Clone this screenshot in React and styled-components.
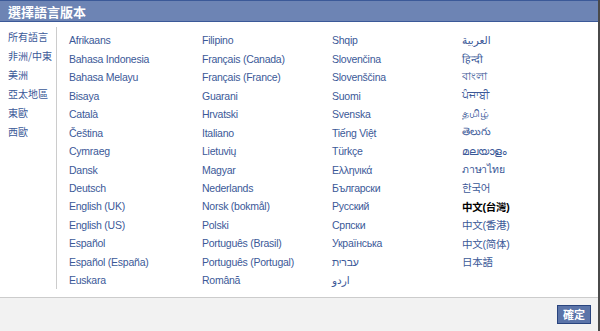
import styled, { createGlobalStyle } from "styled-components";

const GlobalStyle = createGlobalStyle`
  html, body {
    margin: 0;
    padding: 0;
    background: #fff;
  }
  body {
    font-family: Tahoma, "DejaVu Sans", "Noto Sans CJK TC", sans-serif;
  }
`;

const Dialog = styled.div`
  width: 598px;
  height: 331px;
  border-right: 2px solid #4a4a4a;
  display: flex;
  flex-direction: column;
  background: #fff;
`;

const Header = styled.div`
  height: 21px;
  background: #6d84b4;
  border-top: 1px solid #3b5998;
  border-bottom: 1px solid #3b5998;
  display: flex;
  align-items: center;
  padding-left: 8px;
`;

const Title = styled.h2`
  margin: 0;
  font-family: "Noto Sans CJK TC", sans-serif;
  font-size: 13px;
  font-weight: bold;
  color: #fff;
  line-height: 1;
`;

const Body = styled.div`
  flex: 1;
  display: flex;
  padding: 5px 0 8px;
`;

const Sidebar = styled.ul`
  list-style: none;
  margin: 0;
  padding: 0 0 0 8px;
  width: 48px;
  border-right: 1px solid #cccccc;
`;

const SideItem = styled.li`
  height: 19px;
  display: flex;
  align-items: center;
  font-family: "Noto Sans CJK TC", sans-serif;
  font-size: 10px;
  color: #3b5998;
  cursor: pointer;
`;

const Columns = styled.div`
  flex: 1;
  display: grid;
  grid-template-columns: 133px 130px 130px 1fr;
  padding: 4px 0 0 12px;
`;

const Column = styled.ul`
  list-style: none;
  margin: 0;
  padding: 0;
`;

const Lang = styled.li`
  height: 18.46px;
  display: flex;
  align-items: center;
  font-family: "Liberation Sans", "DejaVu Sans", "Noto Sans CJK TC", "Noto Sans CJK KR", sans-serif;
  font-size: 10.5px;
  letter-spacing: -0.25px;
  color: ${(p) => (p.$active ? "#000" : "#3b5998")};
  font-weight: ${(p) => (p.$active ? "bold" : "normal")};
  white-space: nowrap;
  cursor: pointer;
`;

const Footer = styled.div`
  height: 34px;
  background: #f2f2f2;
  border-top: 1px solid #cccccc;
  display: flex;
  align-items: center;
  justify-content: flex-end;
  padding-right: 7px;
`;

const Button = styled.button`
  height: 19px;
  padding: 0 5px;
  background: #5b74a8;
  border: 1px solid #29447e;
  color: #fff;
  font-family: "Noto Sans CJK TC", sans-serif;
  font-size: 11px;
  font-weight: bold;
  line-height: 1;
  cursor: pointer;
`;

const regions = ["所有語言", "非洲/中東", "美洲", "亞太地區", "東歐", "西歐"];

const columns = [
  [
    "Afrikaans", "Bahasa Indonesia", "Bahasa Melayu", "Bisaya", "Català", "Čeština",
    "Cymraeg", "Dansk", "Deutsch", "English (UK)", "English (US)", "Español",
    "Español (España)", "Euskara",
  ],
  [
    "Filipino", "Français (Canada)", "Français (France)", "Guarani", "Hrvatski", "Italiano",
    "Lietuvių", "Magyar", "Nederlands", "Norsk (bokmål)", "Polski", "Português (Brasil)",
    "Português (Portugal)", "Română",
  ],
  [
    "Shqip", "Slovenčina", "Slovenščina", "Suomi", "Svenska", "Tiếng Việt",
    "Türkçe", "Ελληνικά", "Български", "Русский", "Српски", "Українська",
    "עברית", "اردو",
  ],
  [
    "العربية", "हिन्दी", "বাংলা", "ਪੰਜਾਬੀ", "தமிழ்", "తెలుగు",
    "മലയാളം", "ภาษาไทย", "한국어", "中文(台灣)", "中文(香港)", "中文(简体)", "日本語",
  ],
];

const App = () => {
  return (
    <>
      <GlobalStyle />
      <Dialog>
        <Header>
          <Title>選擇語言版本</Title>
        </Header>
        <Body>
          <Sidebar>
            {regions.map((r) => (
              <SideItem key={r}>{r}</SideItem>
            ))}
          </Sidebar>
          <Columns>
            {columns.map((col, i) => (
              <Column key={i}>
                {col.map((lang) => (
                  <Lang key={lang} $active={lang === "中文(台灣)"}>
                    {lang}
                  </Lang>
                ))}
              </Column>
            ))}
          </Columns>
        </Body>
        <Footer>
          <Button>確定</Button>
        </Footer>
      </Dialog>
    </>
  );
};

export default App;
